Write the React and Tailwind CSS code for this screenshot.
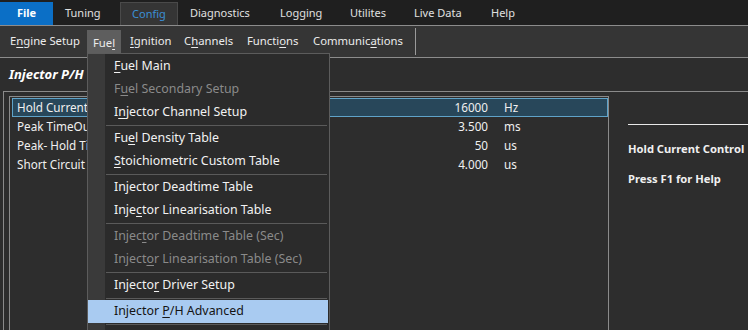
import React from "react";

const U = ({ children }) => <span className="underline underline-offset-2">{children}</span>;

function MenuItem({ children, disabled, active }) {
  return (
    <div
      className={
        "h-[23px] flex items-center whitespace-pre " +
        (active
          ? "bg-[#a9cbf1] text-[#141414] -ml-[17px] pl-[26px] mr-[1px]"
          : disabled
          ? "text-[#8a8a8a] pl-[9px]"
          : "text-[#f2f2f2] pl-[9px]")
      }
    >
      <span>{children}</span>
    </div>
  );
}

const Sep = () => <div className="h-px bg-[#5a5a5a] ml-[1px] mr-[2px] my-[1px]" />;

const Tab = ({ w, children }) => (
  <div className={"h-[23px] flex items-center pl-[12px] text-[#e0e0e0] " + w}>
    <span>{children}</span>
  </div>
);

export default function App() {
  const rows = [
    ["Hold Current", "16000", "Hz"],
    ["Peak TimeOut", "3.500", "ms"],
    ["Peak- Hold Ti", "50", "us"],
    ["Short Circuit", "4.000", "us"],
  ];
  return (
    <div
      className="relative w-[748px] h-[330px] overflow-hidden bg-[#2d2d2d] text-[11.7px] text-[#f0f0f0]"
      style={{ fontFamily: '"Noto Sans", "Open Sans", sans-serif' }}
    >
      {/* Top tab bar */}
      <div className="h-[25px] bg-[#1f1f1f] flex items-end text-[11px]">
        <div className="w-[53px] h-[23px] bg-[#0b6fc6] flex items-center justify-center font-bold text-white">File</div>
        <Tab w="w-[67px]">Tuning</Tab>
        <div className="w-[58px] h-[23px] bg-[#353535] border border-b-0 border-[#4a4a4a] flex items-center justify-center text-[#3b8fd6]">Config</div>
        <Tab w="w-[90px]">Diagnostics</Tab>
        <Tab w="w-[70px]">Logging</Tab>
        <Tab w="w-[64px]">Utilites</Tab>
        <Tab w="w-[77px]">Live Data</Tab>
        <Tab w="w-[60px]">Help</Tab>
      </div>
      <div className="h-px bg-[#8c8c8c]" />
      {/* Second bar */}
      <div className="h-[31px] bg-[#353535] flex items-center text-[#ececec] text-[11.3px] whitespace-pre">
        <div className="pl-[10px] w-[87px] shrink-0"><span>E<U>n</U>gine Setup</span></div>
        <div className="w-[34px] h-[27px] mt-[4px] bg-[#5e5e5e] flex items-center justify-center shrink-0"><span>Fue<U>l</U></span></div>
        <div className="pl-[9px] w-[63px] shrink-0"><span><U>I</U>gnition</span></div>
        <div className="w-[63px] shrink-0"><span>C<U>h</U>annels</span></div>
        <div className="w-[66px] shrink-0"><span>Functi<U>o</U>ns</span></div>
        <div className="w-[102px] shrink-0"><span>Communic<U>a</U>tions</span></div>
        <div className="w-px h-[27px] bg-[#9a9a9a] shrink-0" />
      </div>
      <div className="h-px bg-[#8c8c8c]" />
      {/* Body */}
      <div className="pl-[9px] pt-[7px] h-[25px] font-bold italic text-[13px] text-white">Injector P/H</div>
      <div className="mt-[8px] ml-[3px] border-t border-l border-[#8a8a8a] h-[240px] flex">
        <div className="w-[600px] shrink-0 mt-[4px] ml-[5px] border-t border-l border-r border-[#8a8a8a] pt-[1px] pl-[2px]">
          {rows.map(([label, val, unit], i) => (
            <div
              key={label}
              className={
                "h-[19px] flex items-center whitespace-pre " +
                (i === 0 ? "bg-[#28475a] border border-[#5fa3c9]" : "border border-transparent")
              }
            >
              <div className="pl-[4px] w-[120px]">{label}</div>
              <div className="w-[355px] text-right">{val}</div>
              <div className="pl-[16px]">{unit}</div>
            </div>
          ))}
        </div>
        <div className="flex-1 min-w-0 pl-[19px] pt-[32px] font-bold text-[11.2px]">
          <div className="h-px bg-[#e8e8e8]" />
          <div className="mt-[16px] whitespace-nowrap">Hold Current Control</div>
          <div className="mt-[13px] whitespace-nowrap">Press F1 for Help</div>
        </div>
      </div>

      {/* Dropdown menu overlay */}
      <div className="absolute left-[87px] top-[53px] w-[243px] h-[290px] bg-[#2b2b2b] border border-[#5c5c5c] flex text-[12.4px]">
        <div className="w-[17px] bg-[#3a3a3a]" />
        <div className="flex-1 pt-[1px]">
          <MenuItem><U>F</U>uel Main</MenuItem>
          <MenuItem disabled>F<U>u</U>el Secondary Setup</MenuItem>
          <MenuItem>I<U>n</U>jector Channel Setup</MenuItem>
          <Sep />
          <MenuItem>Fu<U>e</U>l Density Table</MenuItem>
          <MenuItem><U>S</U>toichiometric Custom Table</MenuItem>
          <Sep />
          <MenuItem>In<U>j</U>ector Deadtime Table</MenuItem>
          <MenuItem>Inje<U>c</U>tor Linearisation Table</MenuItem>
          <Sep />
          <MenuItem disabled>Injec<U>t</U>or Deadtime Table (Sec)</MenuItem>
          <MenuItem disabled>Inject<U>o</U>r Linearisation Table (Sec)</MenuItem>
          <Sep />
          <MenuItem>Injecto<U>r</U> Driver Setup</MenuItem>
          <Sep />
          <MenuItem active>Injector <U>P</U>/H Advanced</MenuItem>
          <Sep />
        </div>
      </div>
    </div>
  );
}
